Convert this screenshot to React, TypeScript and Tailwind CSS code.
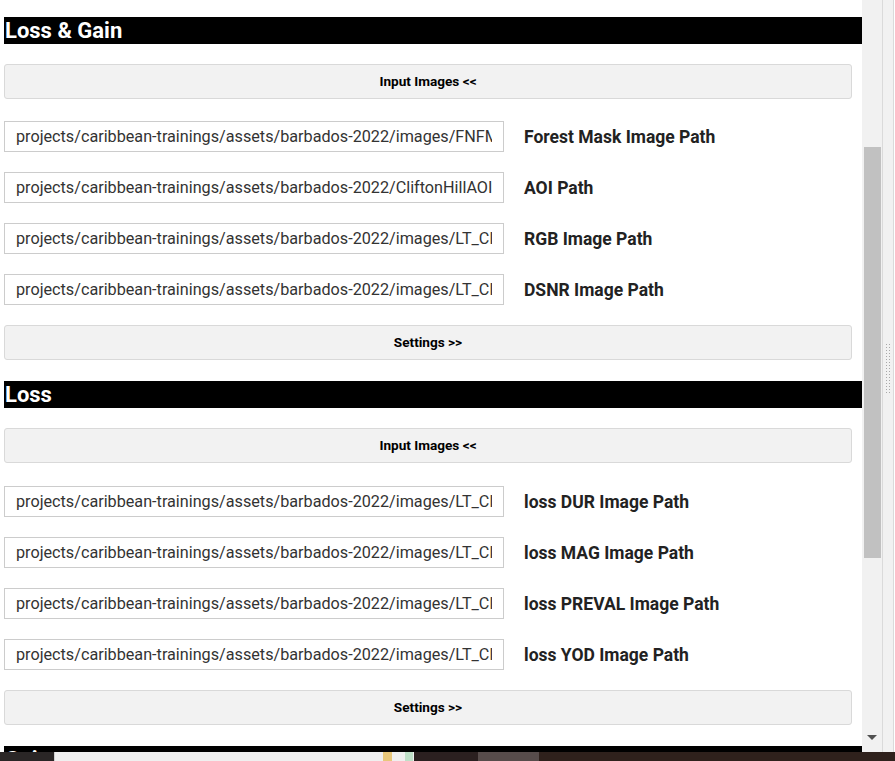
import React from "react";

const font = { fontFamily: "Roboto, 'Liberation Sans', sans-serif" };

function Header({ title }: { title: string }) {
  return (
    <div className="h-[27px] w-[858px] bg-black flex items-center pl-[1px] shrink-0">
      <span className="text-white font-bold text-[22px] leading-none">{title}</span>
    </div>
  );
}

function Btn({ label, className = "" }: { label: string; className?: string }) {
  return (
    <div
      className={`h-[35px] w-[848px] bg-[#f2f2f2] border border-[#d9d9d9] rounded-[3px] flex items-center justify-center text-[13.6px] font-bold text-black ${className}`}
    >
      {label}
    </div>
  );
}

function Row({ value, label }: { value: string; label: string }) {
  return (
    <div className="flex items-center">
      <div className="h-[31px] w-[500px] border border-[#cccccc] bg-white flex items-center pl-[11px] pr-[11px] pt-[1px] overflow-hidden">
        <span className="text-[16.2px] text-[#333] whitespace-nowrap overflow-hidden block w-full">{value}</span>
      </div>
      <span className="ml-[20px] mt-[2px] text-[17.5px] font-bold text-[#222]">{label}</span>
    </div>
  );
}

function Section({ title, rows, firstGap }: { title: string; rows: [string, string][]; firstGap: string }) {
  return (
    <div className="flex flex-col">
      <Header title={title} />
      <Btn label="Input Images <<" className="mt-[20px]" />
      <div className={`flex flex-col gap-[20px] ${firstGap}`}>
        {rows.map(([v, l]) => (
          <Row key={l} value={v} label={l} />
        ))}
      </div>
      <Btn label="Settings >>" className="mt-[20px]" />
    </div>
  );
}

const base = "projects/caribbean-trainings/assets/barbados-2022/";

export default function App() {
  return (
    <div className="w-[895px] h-[761px] overflow-hidden bg-white flex flex-col" style={font}>
      <div className="h-[752px] flex flex-row overflow-hidden">
        <div className="w-[862px] pl-[4px] pt-[17px] flex flex-col gap-[21px] overflow-hidden">
          <Section
            title="Loss & Gain"
            firstGap="mt-[22px]"
            rows={[
              [base + "images/FNFM_2022", "Forest Mask Image Path"],
              [base + "CliftonHillAOI", "AOI Path"],
              [base + "images/LT_Clifton", "RGB Image Path"],
              [base + "images/LT_Clifton", "DSNR Image Path"],
            ]}
          />
          <Section
            title="Loss"
            firstGap="mt-[23px]"
            rows={[
              [base + "images/LT_Clifton", "loss DUR Image Path"],
              [base + "images/LT_Clifton", "loss MAG Image Path"],
              [base + "images/LT_Clifton", "loss PREVAL Image Path"],
              [base + "images/LT_Clifton", "loss YOD Image Path"],
            ]}
          />
          <Header title="Gain" />
        </div>
        {/* scrollbar */}
        <div className="w-[21px] bg-[#f1f1f1] relative border-r border-[#dadada]">
          <div className="absolute left-[2px] top-[147px] w-[17px] h-[411px] bg-[#c1c1c1]" />
          <div className="absolute left-[5px] top-[735px] w-0 h-0 border-l-[5px] border-r-[5px] border-t-[5px] border-l-transparent border-r-transparent border-t-[#505050]" />
        </div>
        <div className="w-[11px] bg-[#f1f1f1] border-r border-[#dadada] relative">
          <div className="absolute left-[2px] top-[343px] w-[7px] h-[51px] bg-[radial-gradient(#a8a8a8_1px,transparent_1px)] bg-[length:3px_3px]" />
        </div>
      </div>
      <div className="h-[9px] flex flex-row">
        <div className="w-[54px] bg-[#2a2626]" />
        <div className="w-[360px] bg-[#f0f0f0] border-l border-[#cfcfcf] relative">
          <div className="absolute left-[328px] top-[0px] w-[9px] h-[9px] bg-[#e8c77a]" />
          <div className="absolute left-[350px] top-[0px] w-[8px] h-[9px] bg-[#bfe0c8]" />
        </div>
        <div className="w-[64px] bg-[#2b2020]" />
        <div className="w-[61px] bg-[#574c4b]" />
        <div className="flex-1 bg-[#2f211c]" />
      </div>
    </div>
  );
}
